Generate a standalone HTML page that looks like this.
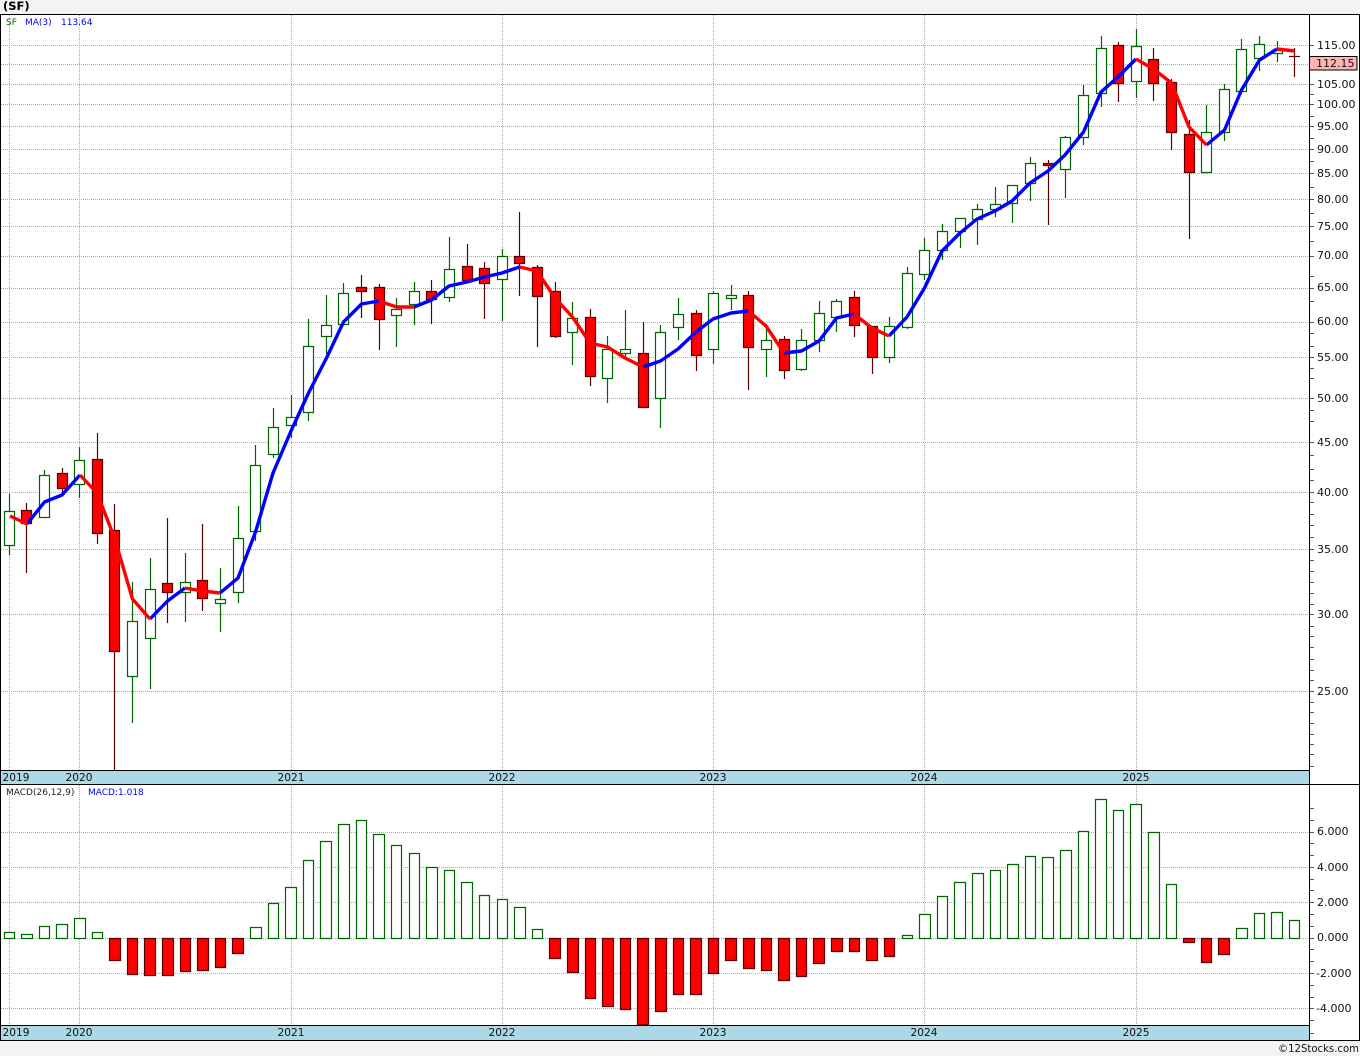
<!DOCTYPE html>
<html><head><meta charset="utf-8"><title>SF</title>
<style>
html,body{margin:0;padding:0;background:#f3f3f3}
svg{display:block}
text{font-family:"DejaVu Sans","Liberation Sans",sans-serif;fill:#111}
</style></head><body>
<svg width="1360" height="1056" viewBox="0 0 1360 1056" xmlns="http://www.w3.org/2000/svg">
<rect width="1360" height="1056" fill="#f3f3f3"/>
<rect x="0" y="14" width="1360" height="1026" fill="#fff"/>
<rect x="1" y="771" width="1308" height="13" fill="#add8e6"/>
<rect x="1" y="1026" width="1308" height="14" fill="#add8e6"/>

<!-- grid -->
<path fill="none" stroke="#aaa" stroke-width="1" stroke-dasharray="1 1" d="M1 45.5H1309M1 64.5H1309M1 84.5H1309M1 104.5H1309M1 126.5H1309M1 149.5H1309M1 173.5H1309M1 199.5H1309M1 226.5H1309M1 256.5H1309M1 288.5H1309M1 322.5H1309M1 357.5H1309M1 398.5H1309M1 442.5H1309M1 492.5H1309M1 549.5H1309M1 614.5H1309M1 691.5H1309
M1 832.5H1309M1 867.5H1309M1 902.5H1309M1 938.5H1309M1 973.5H1309M1 1008.5H1309
M9.5 15V770M79.5 15V770M291.5 15V770M502.5 15V770M713.5 15V770M924.5 15V770M1136.5 15V770
M9.5 785V1025M79.5 785V1025M291.5 785V1025M502.5 785V1025M713.5 785V1025M924.5 785V1025M1136.5 785V1025"/>

<!-- candle wicks -->
<path fill="none" stroke="#006400" stroke-width="1.2" d="M9.5 494V555M44.5 470V518M79.5 447V498M132.5 582V723M150.5 558V689M185.5 553V622M220.5 568V632M238.5 506V603M255.5 445V541M273.5 408V458M291.5 395V438M308.5 319V421M326.5 295V354M343.5 283V324M396.5 298V347M414.5 282V325M449.5 237V302M502.5 249V321M572.5 302V365M607.5 336V403M625.5 310V360M660.5 325V428M678.5 298V340M713.5 291V364M731.5 285V310M766.5 324V377M801.5 329V371M819.5 301V352M836.5 299V332M889.5 317V363M907.5 267V329M924.5 238V280M942.5 224V260M960.5 218V248M977.5 204V245M995.5 187V217M1012.5 185V223M1030.5 157V201M1065.5 136V198M1083.5 85V145M1101.5 36V107M1136.5 29V98M1206.5 105V172M1224.5 84V141M1241.5 39V91M1259.5 36V71M1277.5 41V62"/>
<path fill="none" stroke="#5a0000" stroke-width="1.2" d="M26.5 503V573M62.5 468V493M97.5 433V544M114.5 504V770M167.5 518V623M202.5 524V611M361.5 275V318M379.5 284V350M431.5 280V324M467.5 244V282M484.5 262V319M519.5 212V296M537.5 265V347M555.5 282V338M590.5 309V386M643.5 322V408M696.5 310V371M748.5 291V390M784.5 336V379M854.5 291V337M872.5 326V374M1048.5 160V225M1118.5 42V102M1153.5 48V101M1171.5 79V150M1189.5 120V239M1294.5 48V77"/>

<!-- green bodies -->
<path fill="#fff" stroke="#006400" stroke-width="1.2" d="M4.5 511.5h10V545.5h-10zM39.5 475.5h10V517.5h-10zM74.5 460.5h10V484.5h-10zM127.5 621.5h10V676.5h-10zM145.5 589.5h10V638.5h-10zM180.5 582.5h10V592.5h-10zM215.5 599.5h10V603.5h-10zM233.5 538.5h10V592.5h-10zM250.5 465.5h10V531.5h-10zM268.5 427.5h10V454.5h-10zM286.5 417.5h10V425.5h-10zM303.5 346.5h10V412.5h-10zM321.5 325.5h10V336.5h-10zM338.5 293.5h10V324.5h-10zM391.5 309.5h10V315.5h-10zM409.5 291.5h10V304.5h-10zM444.5 269.5h10V297.5h-10zM497.5 256.5h10V279.5h-10zM567.5 318.5h10V332.5h-10zM602.5 349.5h10V378.5h-10zM620.5 349.5h10V353.5h-10zM655.5 332.5h10V398.5h-10zM673.5 314.5h10V327.5h-10zM708.5 293.5h10V349.5h-10zM726.5 295.5h10V298.5h-10zM761.5 340.5h10V349.5h-10zM796.5 340.5h10V369.5h-10zM814.5 313.5h10V340.5h-10zM831.5 301.5h10V317.5h-10zM884.5 326.5h10V357.5h-10zM902.5 273.5h10V327.5h-10zM919.5 250.5h10V274.5h-10zM937.5 231.5h10V250.5h-10zM955.5 218.5h10V231.5h-10zM972.5 209.5h10V219.5h-10zM990.5 204.5h10V209.5h-10zM1007.5 185.5h10V203.5h-10zM1025.5 163.5h10V183.5h-10zM1060.5 137.5h10V169.5h-10zM1078.5 95.5h10V137.5h-10zM1096.5 48.5h10V93.5h-10zM1131.5 46.5h10V81.5h-10zM1201.5 132.5h10V172.5h-10zM1219.5 89.5h10V132.5h-10zM1236.5 49.5h10V91.5h-10zM1254.5 44.5h10V58.5h-10zM1272.5 50.5h10V53.5h-10z"/>
<!-- red bodies -->
<path fill="#f00" stroke="#5a0000" stroke-width="1.2" d="M21.5 510.5h10V523.5h-10zM57.5 473.5h10V488.5h-10zM92.5 459.5h10V533.5h-10zM109.5 530.5h10V651.5h-10zM162.5 583.5h10V592.5h-10zM197.5 580.5h10V598.5h-10zM356.5 287.5h10V291.5h-10zM374.5 287.5h10V319.5h-10zM426.5 291.5h10V299.5h-10zM462.5 266.5h10V280.5h-10zM479.5 268.5h10V283.5h-10zM514.5 256.5h10V263.5h-10zM532.5 267.5h10V296.5h-10zM550.5 291.5h10V336.5h-10zM585.5 317.5h10V376.5h-10zM638.5 353.5h10V407.5h-10zM691.5 313.5h10V355.5h-10zM743.5 295.5h10V347.5h-10zM779.5 339.5h10V370.5h-10zM849.5 297.5h10V325.5h-10zM867.5 326.5h10V357.5h-10zM1043.5 163.5h10V165.5h-10zM1113.5 45.5h10V83.5h-10zM1148.5 59.5h10V83.5h-10zM1166.5 82.5h10V132.5h-10zM1184.5 134.5h10V172.5h-10z"/>
<path fill="none" stroke="#5a0000" stroke-width="1.2" d="M1289 56.5H1300"/>

<!-- moving average -->
<g fill="none" stroke-width="3.4" stroke-linejoin="round" stroke-linecap="butt">
<path stroke="#00f" d="M27 524L44.5 502L62 495L80 475M150 619L167.5 601L185 588M220 593L238 578L255.5 532L273 473L291 431L308.5 393L326.5 358L343.5 322L361.5 304L379 301M414 307L431.5 300L449 286L467 282L484.5 277L502 273L519.5 267M643 367L660.5 361L678 349L696 332L713 319L731 313L748.5 311M784 353L801.5 351L819 341L836.5 318L854 314M889 336L907 317L924.5 288L942 251L960 233L977 219L995 211L1012 201L1030 183L1048 171L1065 155L1083.5 132L1101 92L1118 77L1136 59M1206.5 145L1224.5 130L1241.5 90L1259.5 60L1277 49"/>
<path stroke="#f00" d="M10 516L27 524M80 475L97 493L114.5 538L132.5 599L150 619M185 588L202.5 591L220 593M379 301L396.5 307L414 307M519.5 267L537 271L555 298L572.5 317L590 343L607.5 347L625 358L643 367M748.5 311L766 326L784 353M854 314L872 328L889 336M1136 59L1153.5 69L1171.5 83L1189 127L1206.5 145M1277 49L1294.5 51"/>
</g>

<!-- MACD bars -->
<path fill="#fff" stroke="#006400" stroke-width="1.2" d="M4.5 932.5h10V938.5h-10zM21.5 934.5h11V938.5h-11zM39.5 926.5h10V938.5h-10zM56.5 924.5h11V938.5h-11zM74.5 918.5h11V938.5h-11zM92.5 932.5h10V938.5h-10zM250.5 927.5h11V938.5h-11zM268.5 903.5h10V938.5h-10zM285.5 887.5h11V938.5h-11zM303.5 860.5h10V938.5h-10zM320.5 841.5h11V938.5h-11zM338.5 824.5h11V938.5h-11zM356.5 820.5h10V938.5h-10zM373.5 834.5h11V938.5h-11zM391.5 845.5h10V938.5h-10zM409.5 853.5h10V938.5h-10zM426.5 867.5h11V938.5h-11zM444.5 870.5h10V938.5h-10zM461.5 882.5h11V938.5h-11zM479.5 895.5h10V938.5h-10zM497.5 899.5h10V938.5h-10zM514.5 907.5h11V938.5h-11zM532.5 929.5h10V938.5h-10z
M902.5 935.5h10V938.5h-10zM919.5 914.5h11V938.5h-11zM937.5 896.5h10V938.5h-10zM954.5 882.5h11V938.5h-11zM972.5 873.5h11V938.5h-11zM990.5 870.5h10V938.5h-10zM1007.5 864.5h11V938.5h-11zM1025.5 856.5h10V938.5h-10zM1042.5 857.5h11V938.5h-11zM1060.5 850.5h11V938.5h-11zM1078.5 831.5h10V938.5h-10zM1095.5 799.5h11V938.5h-11zM1113.5 810.5h10V938.5h-10zM1130.5 804.5h11V938.5h-11zM1148.5 832.5h11V938.5h-11zM1166.5 884.5h10V938.5h-10zM1236.5 928.5h11V938.5h-11zM1254.5 913.5h10V938.5h-10zM1271.5 912.5h11V938.5h-11zM1289.5 920.5h10V938.5h-10z"/>
<path fill="#f00" stroke="#5a0000" stroke-width="1.2" d="M109.5 938.5h11V960.5h-11zM127.5 938.5h10V974.5h-10zM144.5 938.5h11V975.5h-11zM162.5 938.5h11V975.5h-11zM180.5 938.5h10V971.5h-10zM197.5 938.5h11V970.5h-11zM215.5 938.5h10V967.5h-10zM232.5 938.5h11V953.5h-11z
M549.5 938.5h11V958.5h-11zM567.5 938.5h11V972.5h-11zM585.5 938.5h10V998.5h-10zM602.5 938.5h11V1006.5h-11zM620.5 938.5h10V1009.5h-10zM637.5 938.5h11V1025h-11zM655.5 938.5h11V1011.5h-11zM673.5 938.5h10V994.5h-10zM690.5 938.5h11V994.5h-11zM708.5 938.5h10V973.5h-10z
M725.5 938.5h11V960.5h-11zM743.5 938.5h11V968.5h-11zM761.5 938.5h10V970.5h-10zM778.5 938.5h11V980.5h-11zM796.5 938.5h10V976.5h-10zM813.5 938.5h11V963.5h-11zM831.5 938.5h11V951.5h-11zM849.5 938.5h10V951.5h-10zM866.5 938.5h11V960.5h-11zM884.5 938.5h10V956.5h-10z
M1183.5 938.5h11V942.5h-11zM1201.5 938.5h10V962.5h-10zM1218.5 938.5h11V954.5h-11z"/>

<!-- ticks -->
<path fill="none" stroke="#555" stroke-width="1" d="M1309 45.5h5M1309 64.5h5M1309 84.5h5M1309 94.5h5M1309 104.5h5M1309 116.5h5M1309 126.5h5M1309 138.5h5M1309 149.5h5M1309 161.5h5M1309 173.5h5M1309 187.5h5M1309 199.5h5M1309 213.5h5M1309 226.5h5M1309 241.5h5M1309 256.5h5M1309 276.5h5M1309 288.5h5M1309 301.5h5M1309 322.5h5M1309 333.5h5M1309 346.5h5M1309 357.5h5M1309 368.5h5M1309 378.5h5M1309 398.5h5M1309 410.5h5M1309 421.5h5M1309 442.5h5M1309 455.5h5M1309 469.5h5M1309 480.5h5M1309 492.5h5M1309 502.5h5M1309 514.5h5M1309 525.5h5M1309 537.5h5M1309 549.5h5M1309 560.5h5M1309 571.5h5M1309 582.5h5M1309 593.5h5M1309 604.5h5M1309 614.5h5M1309 626.5h5M1309 636.5h5M1309 647.5h5M1309 659.5h5M1309 670.5h5M1309 680.5h5M1309 691.5h5M1309 702.5h5M1309 712.5h5M1309 723.5h5M1309 734.5h5M1309 744.5h5M1309 754.5h5M1309 766.5h5
M1309 808.5h5M1309 820.5h5M1309 832.5h5M1309 843.5h5M1309 855.5h5M1309 867.5h5M1309 879.5h5M1309 890.5h5M1309 902.5h5M1309 914.5h5M1309 926.5h5M1309 938.5h5M1309 949.5h5M1309 961.5h5M1309 973.5h5M1309 985.5h5M1309 997.5h5M1309 1008.5h5M1309 1020.5h5M1309 1033.5h5"/>

<!-- frame -->
<path fill="none" stroke="#000" stroke-width="1" d="M0 14.5H1360M0 770.5H1309M0 784.5H1360M0 1025.5H1309M0 1040.5H1360M.5 14V1041M1309.5 14V1041M1359.5 14V1041"/>

<!-- price tag -->
<rect x="1309.5" y="56.5" width="47.5" height="13.5" fill="#ffb3b3" stroke="#000" stroke-width="1"/>

<!-- header text -->
<text x="3" y="10" font-size="11.5" font-weight="700" style="fill:#000">(SF)</text>
<text x="6" y="25" font-size="9" style="fill:#006400">SF</text>
<text x="25" y="25" font-size="9" style="fill:#00f">MA(3)</text>
<text x="61" y="25" font-size="9" style="fill:#00f">113.64</text>
<text x="6" y="795" font-size="9" style="fill:#222">MACD(26,12,9)</text>
<text x="88" y="795" font-size="9" style="fill:#00f">MACD:1.018</text>

<!-- price axis -->
<g font-size="11">
<text x="1317" y="49">115.00</text>
<text x="1316" y="67">112.15</text>
<text x="1317" y="88">105.00</text>
<text x="1317" y="108">100.00</text>
<text x="1317" y="130">95.00</text>
<text x="1317" y="153">90.00</text>
<text x="1317" y="177">85.00</text>
<text x="1317" y="203">80.00</text>
<text x="1317" y="230">75.00</text>
<text x="1317" y="259">70.00</text>
<text x="1317" y="291">65.00</text>
<text x="1317" y="325">60.00</text>
<text x="1317" y="361">55.00</text>
<text x="1317" y="402">50.00</text>
<text x="1317" y="446">45.00</text>
<text x="1317" y="496">40.00</text>
<text x="1317" y="553">35.00</text>
<text x="1317" y="618">30.00</text>
<text x="1317" y="695">25.00</text>
<text x="1317" y="835">6.000</text>
<text x="1317" y="871">4.000</text>
<text x="1317" y="906">2.000</text>
<text x="1317" y="941">0.000</text>
<text x="1316" y="977">-2.000</text>
<text x="1316" y="1012">-4.000</text>
</g>

<!-- year labels -->
<g font-size="10.6" text-anchor="middle">
<text x="16" y="781">2019</text><text x="79" y="781">2020</text><text x="291" y="781">2021</text><text x="502" y="781">2022</text><text x="713" y="781">2023</text><text x="924" y="781">2024</text><text x="1136" y="781">2025</text>
<text x="16" y="1036">2019</text><text x="79" y="1036">2020</text><text x="291" y="1036">2021</text><text x="502" y="1036">2022</text><text x="713" y="1036">2023</text><text x="924" y="1036">2024</text><text x="1136" y="1036">2025</text>
</g>

<text x="1278" y="1052" font-size="10.5" textLength="81" lengthAdjust="spacingAndGlyphs">©12Stocks.com</text>
</svg>
</body></html>
